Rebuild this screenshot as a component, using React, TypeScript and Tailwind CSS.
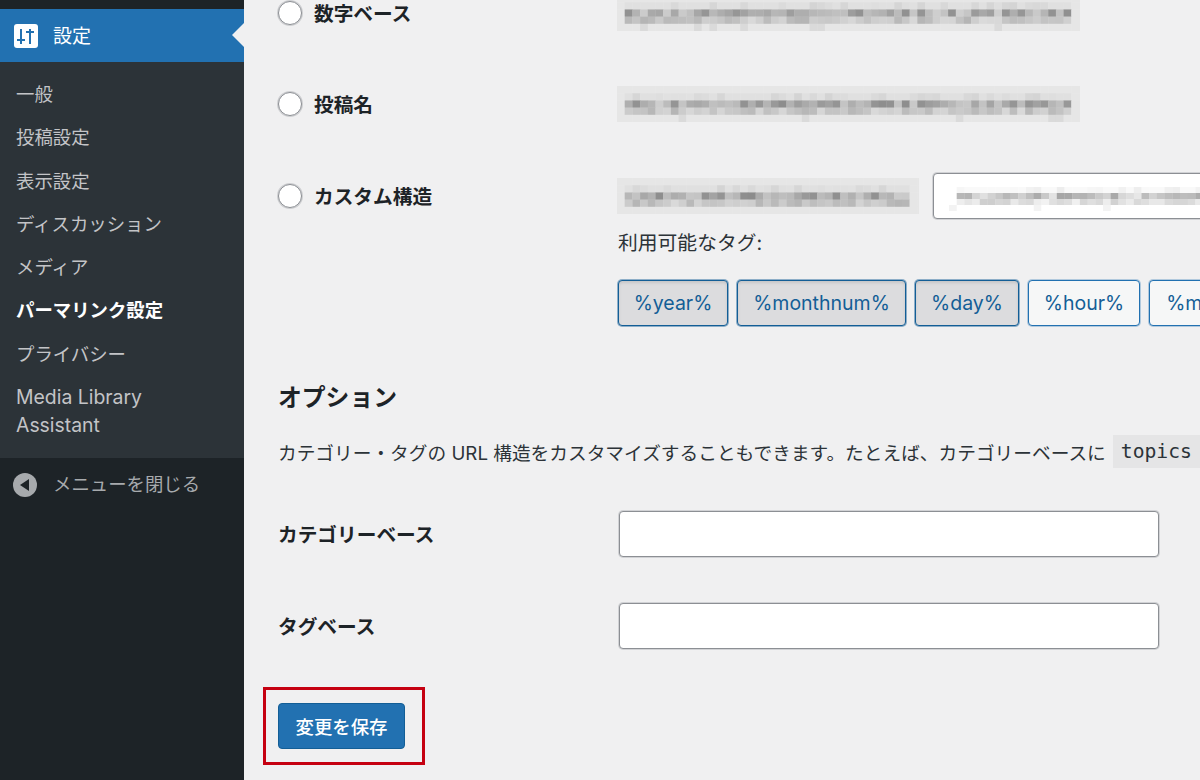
import React from "react";

const font = { fontFamily: 'Inter,"Noto Sans CJK JP",sans-serif' };

function Mosaic({ w, h, seed, cell = 7.7, rows = 5, white = false }: { w: number; h: number; seed: number; cell?: number; rows?: number; white?: boolean }) {
  const cells: React.ReactNode[] = [];
  let s = seed;
  const next = () => {
    s = (s * 1664525 + 1013904223) >>> 0;
    return (s >>> 8) / 16777216;
  };
  const ch = h / rows;
  const cols = Math.ceil(w / cell);
  const base = 230;
  for (let r = 0; r < rows; r++) {
    for (let c = 0; c < cols; c++) {
      const edge = c === 0 || c >= cols - 2;
      const v = next();
      let g = base;
      if (r === 1) g = edge ? base : v > 0.55 ? 195 + v * 30 : 224;
      if (r === 2) g = edge ? base : 140 + v * 68;
      if (r === 3) g = edge ? base : 180 + v * 38;
      if (r === 4) g = v > 0.94 ? 218 : base;
      const gi = Math.round(white ? Math.min(255, 255 - (base - g)) : g);
      cells.push(<rect key={r + "-" + c} x={c * cell} y={r * ch} width={cell + 0.3} height={ch + 0.3} fill={`rgb(${gi},${gi},${gi})`} />);
    }
  }
  return (
    <svg width={w} height={h} className="block shrink-0">
      {cells}
    </svg>
  );
}

function RadioLabel({ label }: { label: string }) {
  return (
    <div className="flex items-center w-[339px] shrink-0">
      <span className="w-[24px] h-[24px] rounded-full border border-[#8c8f94] shadow-[0_0_0_1px_rgba(140,143,148,0.35)] bg-white shrink-0" />
      <span className="ml-[12px] pt-[2px] text-[19.7px] leading-[26px] font-bold text-[#1d2327] whitespace-nowrap">{label}</span>
    </div>
  );
}

function Tag({ t, w, active }: { t: string; w: string; active?: boolean }) {
  return (
    <span
      className={`h-[46px] pt-[2px] flex items-center justify-center rounded-[4px] border text-[19.5px] shrink-0 text-[#135e96] ${w} ${
        active
          ? "bg-[#dcdcde] border-[#135e96] shadow-[0_0_0_1px_rgba(19,94,150,0.45),inset_0_2px_3px_rgba(0,0,0,0.1)]"
          : "bg-[#f6f7f7] border-[#2271b1] shadow-[0_0_0_1px_rgba(34,113,177,0.3)]"
      }`}
    >
      {t}
    </span>
  );
}

const menu = ["一般", "投稿設定", "表示設定", "ディスカッション", "メディア"];

export default function App() {
  return (
    <div className="w-[1200px] h-[780px] flex overflow-hidden bg-[#f0f0f1]" style={font}>
      <aside className="w-[244px] shrink-0 h-full bg-[#1d2327] flex flex-col">
        <div className="h-[9px] shrink-0" />
        <div className="relative h-[53px] bg-[#2271b1] flex items-center pl-[14px] text-white">
          <span className="w-[24px] h-[24px] rounded-[3px] bg-white flex items-center justify-center shrink-0">
            <svg width="24" height="24" viewBox="0 0 24 24" fill="none" stroke="#2271b1" strokeWidth="2">
              <path d="M7 5v15" />
              <path d="M16 5v15" />
              <path d="M3 16h8" />
              <path d="M12 8h8" />
            </svg>
          </span>
          <span className="ml-[15px] pt-[3px] text-[19px]">設定</span>
          <span className="absolute right-0 top-[14px] w-0 h-0 border-y-[12.5px] border-y-transparent border-r-[12px] border-r-[#f0f0f1]" />
        </div>
        <div className="h-[396px] shrink-0 bg-[#2c3338] pt-[19px] pl-[16px] text-[#c3c4c7] text-[18.4px]">
          {menu.map((m) => (
            <div key={m} className="h-[43.3px] leading-[27px]">{m}</div>
          ))}
          <div className="h-[43.3px] leading-[27px] text-white font-bold">パーマリンク設定</div>
          <div className="h-[43.3px] leading-[27px]">プライバシー</div>
          <div className="-mt-[1px] leading-[28px] text-[19.4px]">
            Media Library<br />Assistant
          </div>
        </div>
        <div className="flex items-center pl-[13px] pt-[13px] text-[#a7aaad]">
          <span className="w-[24px] h-[24px] rounded-full bg-[#a7aaad] flex items-center justify-center">
            <span className="w-0 h-0 border-y-[6px] border-y-transparent border-r-[9px] border-r-[#1d2327] mr-[2px]" />
          </span>
          <span className="ml-[16px] text-[18.4px]">メニューを閉じる</span>
        </div>
      </aside>
      <main className="flex-1 min-w-0 overflow-hidden pl-[34px] text-[#2c3338]">
        <div className="flex items-center h-[91px] -mt-[32.5px]">
          <RadioLabel label="数字ベース" />
          <Mosaic w={463} h={36} seed={11} />
        </div>
        <div className="flex items-center h-[91px]">
          <RadioLabel label="投稿名" />
          <Mosaic w={463} h={36} seed={27} />
        </div>
        <div className="flex items-start mt-[23.5px]">
          <div className="pt-[9px]">
            <RadioLabel label="カスタム構造" />
          </div>
          <div className="flex flex-col">
            <div className="flex items-center">
              <Mosaic w={302} h={36} seed={27} />
              <div className="ml-[14px] w-[400px] h-[46px] rounded-[4px] border border-[#8c8f94] shadow-[0_0_0_1px_rgba(140,143,148,0.3)] bg-white flex items-center pl-[15px] shrink-0">
                <Mosaic w={300} h={30} seed={91} white />
              </div>
            </div>
            <div className="mt-[11px] ml-[1px] text-[19.8px] leading-[26px]">利用可能なタグ:</div>
            <div className="mt-[24px] ml-[1px] flex gap-[9px] w-[700px]">
              <Tag t="%year%" w="w-[110px]" active />
              <Tag t="%monthnum%" w="w-[169px]" active />
              <Tag t="%day%" w="w-[104px]" active />
              <Tag t="%hour%" w="w-[112px]" />
              <Tag t="%minute%" w="w-[135px]" />
            </div>
          </div>
        </div>
        <h2 className="mt-[56px] text-[23.8px] leading-[32px] font-bold text-[#1d2327]">オプション</h2>
        <div className="mt-[21px] flex items-center text-[18.7px] whitespace-nowrap h-[33px]">
          <span className="pt-[5px]">カテゴリー・タグの URL 構造をカスタマイズすることもできます。たとえば、カテゴリーベースに</span>
          <code className="ml-[7px] px-[8px] h-[33px] flex items-center bg-[#e5e5e6] text-[19.7px] text-[#2c3338]" style={{ fontFamily: '"DejaVu Sans Mono",monospace' }}>topics</code>
        </div>
        <div className="mt-[43px] flex items-center h-[46px]">
          <span className="w-[341px] pt-[4px] shrink-0 text-[19.7px] font-bold text-[#1d2327]">カテゴリーベース</span>
          <span className="w-[540px] h-[46px] rounded-[4px] border border-[#8c8f94] shadow-[0_0_0_1px_rgba(140,143,148,0.3)] bg-white" />
        </div>
        <div className="mt-[46px] flex items-center h-[46px]">
          <span className="w-[341px] pt-[4px] shrink-0 text-[19.7px] font-bold text-[#1d2327]">タグベース</span>
          <span className="w-[540px] h-[46px] rounded-[4px] border border-[#8c8f94] shadow-[0_0_0_1px_rgba(140,143,148,0.3)] bg-white" />
        </div>
        <div className="relative mt-[54px] w-[127px] h-[46px]">
          <span className="w-full h-full pt-[3px] rounded-[4px] bg-[#2271b1] border border-[#135e96] text-white text-[18.4px] font-medium flex items-center justify-center">変更を保存</span>
          <span className="absolute -left-[15px] -top-[16px] w-[162px] h-[78px] border-[3px] border-[#c50011]" />
        </div>
      </main>
    </div>
  );
}
